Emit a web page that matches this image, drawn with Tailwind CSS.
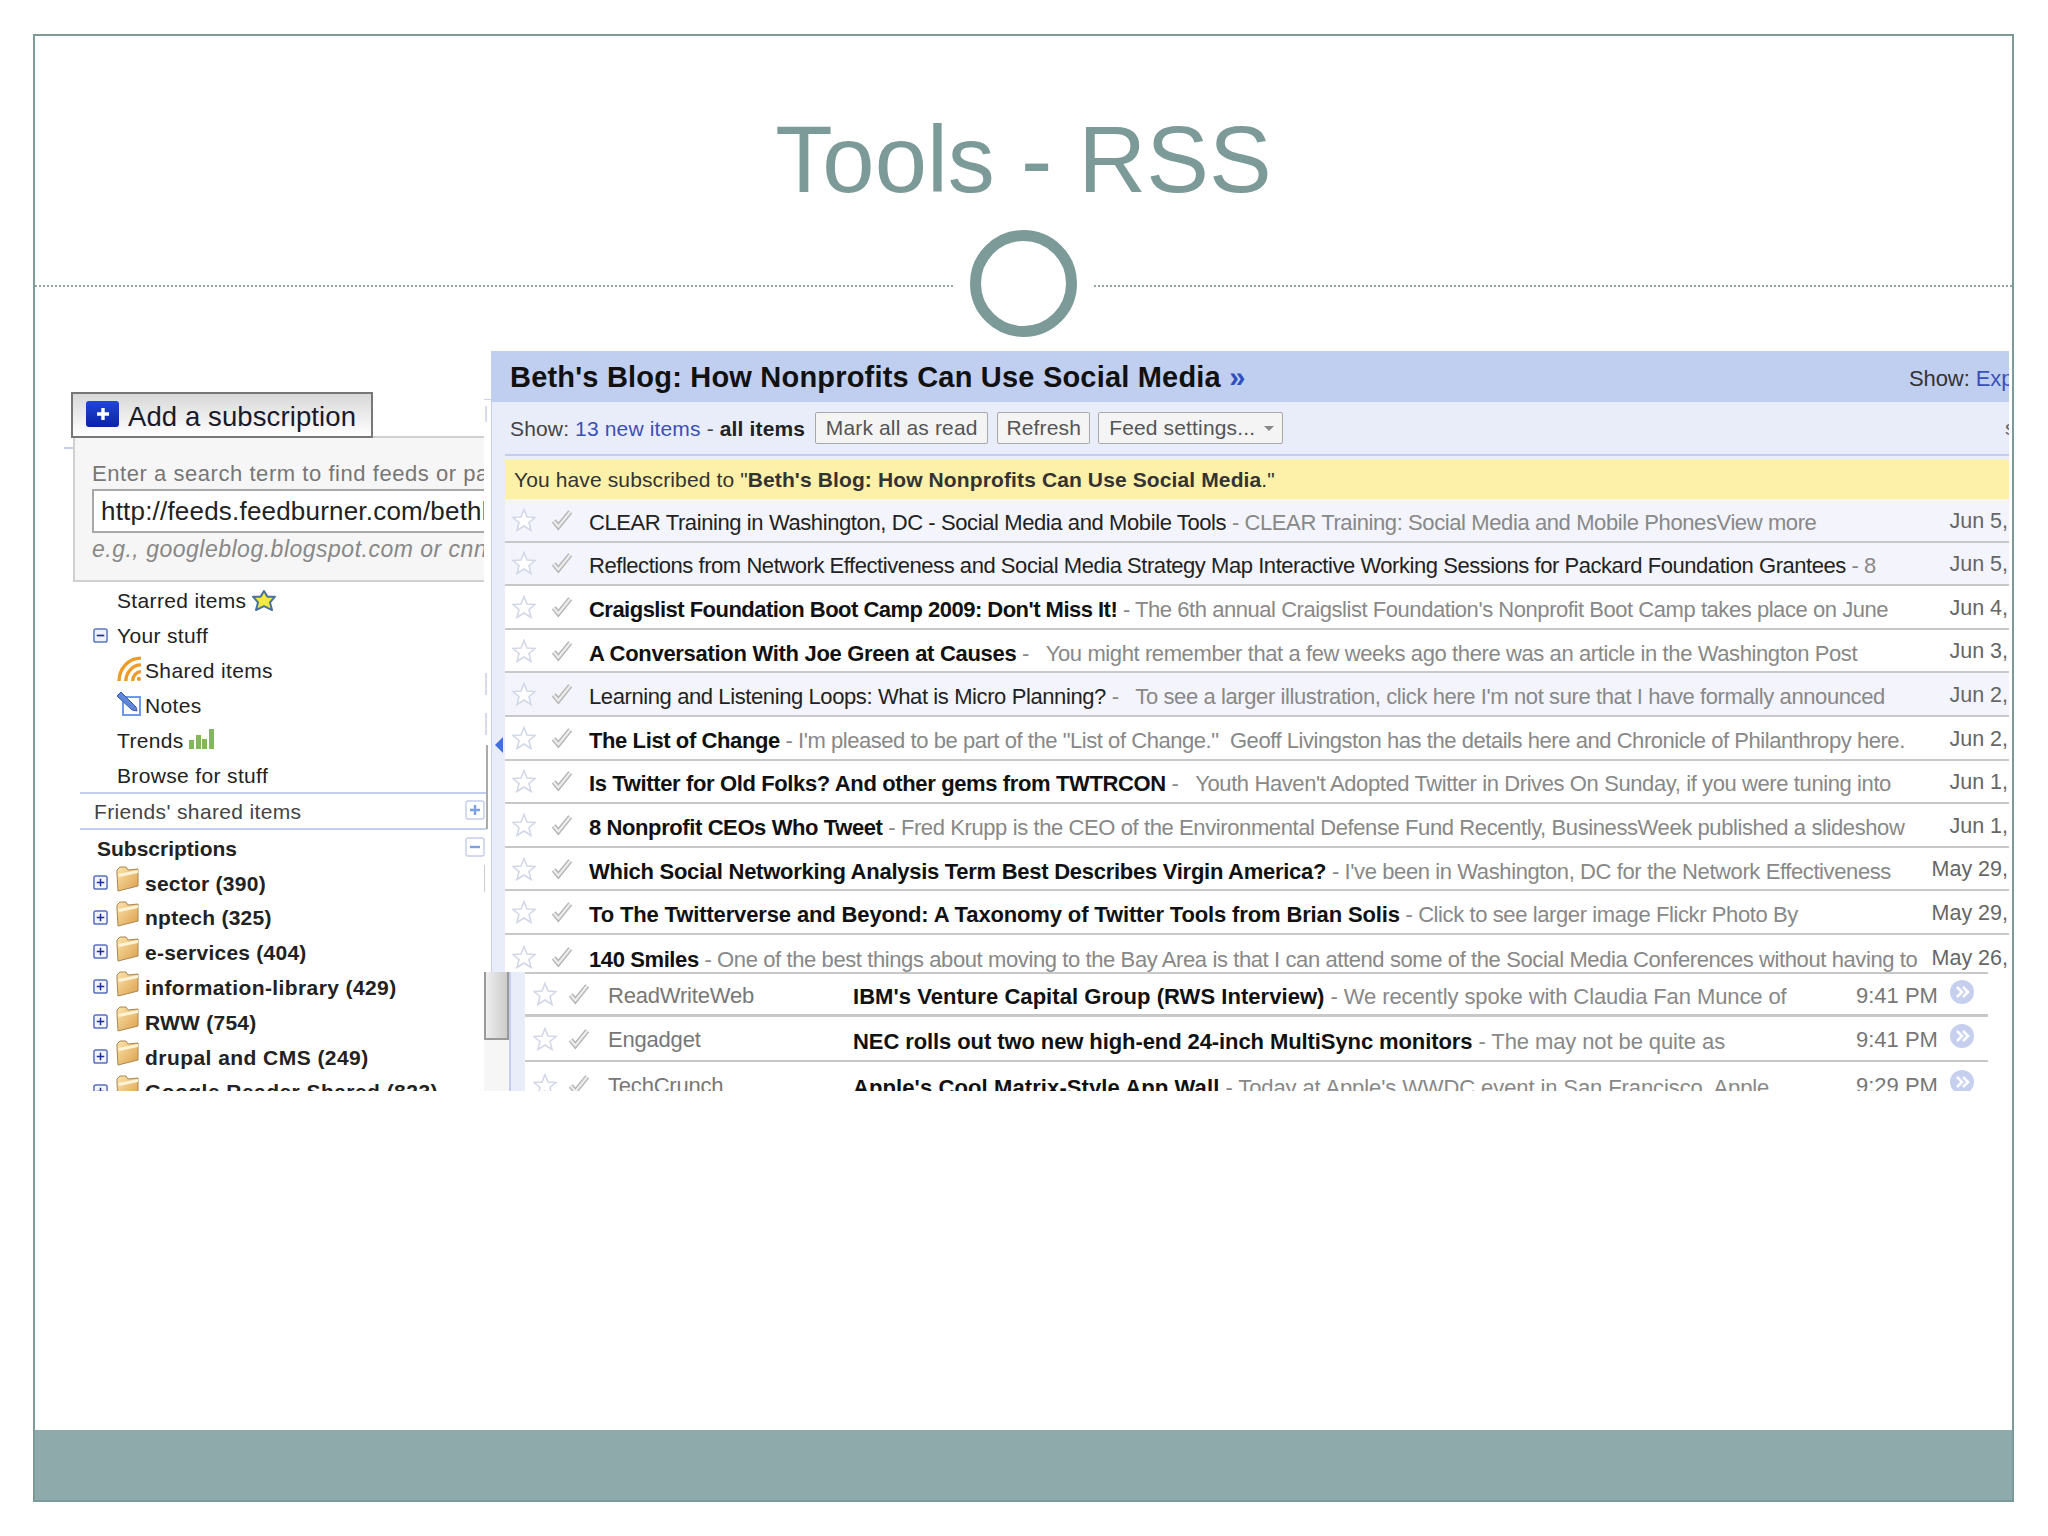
<!DOCTYPE html>
<html>
<head>
<meta charset="utf-8">
<script src="https://cdn.jsdelivr.net/npm/@tailwindcss/browser@4"></script>
</head>
<body class="bg-white font-['Liberation_Sans',Arial,sans-serif]">
<svg class="block w-0 h-0">
<defs>
<linearGradient id="fg" x1="0" y1="0" x2="1" y2="1"><stop offset="0" stop-color="#fbe3ac"/><stop offset="1" stop-color="#dda04c"/></linearGradient>
<symbol id="star" viewBox="0 0 24 24"><polygon points="12,1.5 15,9 23,9.5 17,14.5 19,22.5 12,18 5,22.5 7,14.5 1,9.5 9,9" fill="#fff" stroke="#d3d8e8" stroke-width="1.6"/></symbol>
<symbol id="check" viewBox="0 0 24 24"><path d="M3 13l5 6L21 3" fill="none" stroke="#b4b4b4" stroke-width="5.5"/><path d="M3 13l5 6L21 3" fill="none" stroke="#ececec" stroke-width="2.5"/></symbol>
<symbol id="plusbox" viewBox="0 0 16 16"><rect x="1" y="1" width="14" height="14" rx="2" fill="#f2f4fc" stroke="#5a6fc0" stroke-width="1.6"/><path d="M4 8h8M8 4v8" stroke="#1f2fa0" stroke-width="1.6"/></symbol>
<symbol id="folder" viewBox="0 0 23 26"><path d="M1 8V4l3-3h6l2 3 10-1v17L2 25z" fill="url(#fg)" stroke="#a8884f" stroke-width="1"/><path d="M2 8l20-4v3L3 11z" fill="#fff3d6"/></symbol>
<symbol id="chev" viewBox="0 0 24 24"><circle cx="12" cy="12" r="12" fill="#c6d0ee"/><path d="M7 7l5 5-5 5M13 7l5 5-5 5" fill="none" stroke="#fff" stroke-width="2.5"/></symbol>
</defs>
</svg>
<div class="pt-[34px] pl-[33px]">
<div class="w-[1981px] h-[1468px] border-2 border-[#7b9a98] flex flex-col bg-white">
  <h1 class="h-[193px] shrink-0 pt-[71px] text-center text-[94px] leading-[106px] text-[#7b9a98] font-normal">Tools - RSS</h1>
  <div class="h-[108px] shrink-0 flex items-center">
    <div class="flex-1 mt-[6px] border-t-2 border-dotted border-[#8fa8a6]"></div>
    <div class="w-[107px] h-[107px] mx-[17px] rounded-full border-[11px] border-[#7b9a98]"></div>
    <div class="flex-1 mt-[6px] border-t-2 border-dotted border-[#8fa8a6]"></div>
  </div>
  <div class="mt-[14px] h-[740px] shrink-0 flex overflow-hidden">
    <!-- left column -->
    <div class="ml-[29px] w-[420px] shrink-0 pt-[41px] text-[21px] tracking-[0.35px] text-[#222]">
      <div class="ml-[7px] w-[302px] h-[46px] border-2 border-[#777] bg-gradient-to-b from-[#d8d8d8] to-white flex items-center gap-[9px] pl-[13px] relative z-10 whitespace-nowrap">
        <div class="w-[33px] h-[26px] -mt-[3px] rounded-[3px] bg-gradient-to-b from-[#2346d8] to-[#0a22a8] flex items-center justify-center text-white"><svg class="w-[14px] h-[14px]" viewBox="0 0 14 14"><path d="M7 1v12M1 7h12" stroke="#fff" stroke-width="3.4"/></svg></div>
        <span class="text-[27.5px] pt-[3px] tracking-[0.1px] text-[#1a1a2a]">Add a subscription</span>
      </div>
      <div class="relative ml-[9px] w-[411px] -mt-[2px]">
        <div class="absolute left-[-9px] top-[11px] w-[9px] h-[2px] bg-[#c3cdec]"></div>
        <div class="h-[146px] bg-[#f6f6f6] border-l-2 border-b-2 border-t-2 border-[#d0d0d0] pl-[17px] pt-[22px] overflow-hidden whitespace-nowrap">
          <div class="text-[22px] leading-[28px] tracking-[0.55px] text-[#777]">Enter a search term to find feeds or paste</div>
          <div class="mt-[1px] h-[44px] border-2 border-[#a8a8a8] border-r-0 bg-white pl-[7px] text-[26px] leading-[40px] tracking-[0.2px] text-[#222]">http://feeds.feedburner.com/bethkanter</div>
          <div class="text-[23px] leading-[32px] italic tracking-[0.5px] text-[#888]">e.g., googleblog.blogspot.com or cnn.com</div>
        </div>
      </div>
      <div class="ml-[53px] mt-[1px] h-[35px] flex items-center gap-[6px]"><span>Starred items</span><svg class="w-[24px] h-[21px]" viewBox="0 0 24 22" preserveAspectRatio="none"><polygon points="12,1 15.5,7 23,7 18,13 20,21 12,17 4,21 6,13 1,7 8.5,7" fill="#f5e83e" stroke="#47719f" stroke-width="2" stroke-linejoin="round"/></svg></div>
      <div class="ml-[29px] h-[35px] flex items-center gap-[9px]"><svg class="w-[15px] h-[15px]" viewBox="0 0 16 16"><rect x="1" y="1" width="14" height="14" rx="2" fill="#eef1fb" stroke="#5a78c0" stroke-width="1.6"/><path d="M4 8h8" stroke="#1f2fa0" stroke-width="1.8"/></svg><span>Your stuff</span></div>
      <div class="ml-[53px] h-[35px] flex items-center gap-[3px]"><svg class="w-[25px] h-[25px] -mt-[4px]" viewBox="0 0 24 24"><g fill="none" stroke="#f09a28" stroke-width="3.2"><path d="M2 24C2 12 11 2 23 2"/><path d="M8.5 24C8.5 16 15 8.5 23 8.5"/><path d="M15 24c0-5 4-9 8-9"/></g><circle cx="21" cy="22" r="2" fill="#f09a28"/></svg><span>Shared items</span></div>
      <div class="ml-[53px] h-[35px] flex items-center gap-[4px]"><svg class="w-[24px] h-[25px] -mt-[4px]" viewBox="0 0 24 25"><path d="M6 6h17v18H6z" fill="#fff" stroke="#6f9ae8" stroke-width="2"/><path d="M0 5l4-4 15 15 1 4-5-1z" fill="#5f86d8" stroke="#3a5ab0"/></svg><span>Notes</span></div>
      <div class="ml-[53px] h-[35px] flex items-center gap-[5px]"><span>Trends</span><svg class="w-[25px] h-[20px] -mt-[4px]" viewBox="0 0 25 20"><path d="M0 11h5v9H0zM7 6h5v14H7zM13 10h5v10h-5zM20 0h5v20h-5z" fill="#82b858"/></svg></div>
      <div class="ml-[53px] h-[35px] flex items-center">Browse for stuff</div>
      <div class="ml-[16px] w-[407px] h-[38px] border-y-2 border-[#c3cdec] flex items-center justify-between pl-[14px] pr-[2px] mt-[-1px] text-[#444]"><span class="pt-[1px]">Friends' shared items</span><svg class="w-[20px] h-[20px] -mt-[3px]" viewBox="0 0 20 20"><rect x="1" y="1" width="18" height="18" rx="2" fill="#fff" stroke="#c3cdec" stroke-width="1.4"/><path d="M5 10h10M10 5v10" stroke="#7ba0e8" stroke-width="2.4"/></svg></div>
      <div class="ml-[16px] w-[407px] h-[36px] flex items-center justify-between pl-[17px] pr-[2px] font-bold tracking-[0px] text-[21px] text-[#222]"><span class="pt-[1px]">Subscriptions</span><svg class="w-[20px] h-[20px] -mt-[3px]" viewBox="0 0 20 20"><rect x="1" y="1" width="18" height="18" rx="2" fill="#fff" stroke="#c3cdec" stroke-width="1.4"/><path d="M5 10h10" stroke="#7ba0e8" stroke-width="2.4"/></svg></div>
      <div class="ml-[29px] font-bold tracking-[0.25px] text-[#222]">
        <div class="h-[34.8px] flex items-center"><svg class="w-[15px] h-[15px] mr-[8px] -mt-[2px]"><use href="#plusbox"/></svg><svg class="w-[23px] h-[26px] mr-[6px] -mt-[8px]"><use href="#folder"/></svg><span>sector (390)</span></div>
        <div class="h-[34.8px] flex items-center"><svg class="w-[15px] h-[15px] mr-[8px] -mt-[2px]"><use href="#plusbox"/></svg><svg class="w-[23px] h-[26px] mr-[6px] -mt-[8px]"><use href="#folder"/></svg><span>nptech (325)</span></div>
        <div class="h-[34.8px] flex items-center"><svg class="w-[15px] h-[15px] mr-[8px] -mt-[2px]"><use href="#plusbox"/></svg><svg class="w-[23px] h-[26px] mr-[6px] -mt-[8px]"><use href="#folder"/></svg><span>e-services (404)</span></div>
        <div class="h-[34.8px] flex items-center"><svg class="w-[15px] h-[15px] mr-[8px] -mt-[2px]"><use href="#plusbox"/></svg><svg class="w-[23px] h-[26px] mr-[6px] -mt-[8px]"><use href="#folder"/></svg><span class="tracking-[0.4px]">information-library (429)</span></div>
        <div class="h-[34.8px] flex items-center"><svg class="w-[15px] h-[15px] mr-[8px] -mt-[2px]"><use href="#plusbox"/></svg><svg class="w-[23px] h-[26px] mr-[6px] -mt-[8px]"><use href="#folder"/></svg><span>RWW (754)</span></div>
        <div class="h-[34.8px] flex items-center"><svg class="w-[15px] h-[15px] mr-[8px] -mt-[2px]"><use href="#plusbox"/></svg><svg class="w-[23px] h-[26px] mr-[6px] -mt-[8px]"><use href="#folder"/></svg><span class="tracking-[0.45px]">drupal and CMS (249)</span></div>
        <div class="h-[34.8px] flex items-center"><svg class="w-[15px] h-[15px] mr-[8px] -mt-[2px]"><use href="#plusbox"/></svg><svg class="w-[23px] h-[26px] mr-[6px] -mt-[8px]"><use href="#folder"/></svg><span class="tracking-[0.45px]">Google Reader Shared (823)</span></div>
      </div>
    </div>
    <!-- separator -->
    <div class="w-[7px] shrink-0">
      <div class="mt-[48px] h-[1px] bg-[#ccd4ee]"></div>
      <div class="mt-[6px] ml-[1px] w-[2px] h-[16px] bg-[#d5dcf2]"></div>
      <div class="mt-[251px] ml-[1px] w-[2px] h-[22px] bg-[#d5dcf2]"></div>
      <div class="mt-[18px] ml-[1px] w-[2px] h-[22px] bg-[#d5dcf2]"></div>
      <div class="mt-[10px] ml-[2px] w-[2px] h-[84px] bg-[#aaa]"></div>
      <div class="mt-[36px] w-[1px] h-[27px] bg-[#ccc]"></div>
    </div>
    <!-- right column -->
    <div class="w-[1518px] shrink-0 flex flex-col text-[22px] tracking-[-0.4px]">
      <div class="h-[51px] shrink-0 bg-[#c0cef0] flex items-center justify-between pl-[19px] overflow-hidden whitespace-nowrap">
        <div class="text-[29px] pt-[2px] font-bold tracking-[0.2px] text-[#111]">Beth's Blog: How Nonprofits Can Use Social Media <span class="text-[#2f4fc0]">»</span></div>
        <div class="text-[22px] pt-[3px] text-[#333] w-[100px] shrink-0 overflow-hidden tracking-[-0.1px]">Show: <span class="text-[#3a50b8]">Expanded</span></div>
      </div>
      <div class="relative h-[570px] shrink-0 bg-[#e9edfa] border-l border-[#c8d2f0] flex flex-col">
        <div class="absolute left-[3px] top-[335px] w-0 h-0 border-y-[8px] border-r-[8px] border-y-transparent border-r-[#3f6fe0]"></div>
        <div class="h-[52px] shrink-0 flex items-center pl-[18px] text-[21px] tracking-[0.15px] text-[#444] whitespace-nowrap">
          <span class="pt-[1px]">Show: <span class="text-[#3a50b8]">13 new items</span> - <b class="text-[#222]">all items</b></span>
          <span class="ml-[10px] w-[173px] h-[32px] flex items-center justify-center rounded-[2px] border border-[#a8a8a8] bg-[#f4f4f4] text-[#555]">Mark all as read</span>
          <span class="ml-[9px] w-[93px] h-[32px] flex items-center justify-center rounded-[2px] border border-[#a8a8a8] bg-[#f4f4f4] text-[#555]">Refresh</span>
          <span class="ml-[8px] w-[185px] h-[32px] flex items-center pl-[10px] rounded-[2px] border border-[#a8a8a8] bg-[#f4f4f4] text-[#555]">Feed settings...<span class="ml-[9px] w-0 h-0 border-x-[5px] border-t-[5px] border-x-transparent border-t-[#888]"></span></span>
          <span class="ml-auto w-[4px] overflow-hidden text-[#666]">s</span>
        </div>
        <div class="ml-[13px] flex-1 min-h-0 border-t-2 border-[#c3cdec] pt-[4px] flex flex-col">
          <div class="h-[39px] shrink-0 bg-[#fdf0a8] flex items-center pl-[9px] text-[21px] tracking-[0.12px] text-[#333] whitespace-nowrap">You have subscribed to "<b>Beth's Blog: How Nonprofits Can Use Social Media</b>."</div>
          <div class="flex-1 min-h-0 overflow-hidden">
            <div class="h-[43.6px] bg-[#f3f4fc] border-b-2 border-[#c8c8c8] flex items-center whitespace-nowrap"><svg class="ml-[7px] w-[24px] h-[24px] shrink-0"><use href="#star"/></svg><svg class="ml-[15px] w-[22px] h-[22px] shrink-0"><use href="#check"/></svg><div class="ml-[16px] w-[1340px] pt-[5px] shrink-0 overflow-hidden text-[#888]"><span class="text-[#222]">CLEAR Training in Washington, DC - Social Media and Mobile Tools</span> - CLEAR Training: Social Media and Mobile PhonesView more</div><div class="flex-1 pt-[2px] text-right text-[#666] tracking-[0px] text-[21.5px] pr-[1px]">Jun 5,</div></div>
            <div class="h-[43.6px] bg-[#f3f4fc] border-b-2 border-[#c8c8c8] flex items-center whitespace-nowrap"><svg class="ml-[7px] w-[24px] h-[24px] shrink-0"><use href="#star"/></svg><svg class="ml-[15px] w-[22px] h-[22px] shrink-0"><use href="#check"/></svg><div class="ml-[16px] w-[1340px] pt-[5px] shrink-0 overflow-hidden text-[#888] tracking-[-0.45px]"><span class="text-[#222]">Reflections from Network Effectiveness and Social Media Strategy Map Interactive Working Sessions for Packard Foundation Grantees</span> - 8</div><div class="flex-1 pt-[2px] text-right text-[#666] tracking-[0px] text-[21.5px] pr-[1px]">Jun 5,</div></div>
            <div class="h-[43.6px] bg-white border-b-2 border-[#c8c8c8] flex items-center whitespace-nowrap"><svg class="ml-[7px] w-[24px] h-[24px] shrink-0"><use href="#star"/></svg><svg class="ml-[15px] w-[22px] h-[22px] shrink-0"><use href="#check"/></svg><div class="ml-[16px] w-[1340px] pt-[5px] shrink-0 overflow-hidden text-[#888] tracking-[-0.45px]"><b class="text-[#111] tracking-[-0.52px]">Craigslist Foundation Boot Camp 2009: Don't Miss It!</b> - The 6th annual Craigslist Foundation's Nonprofit Boot Camp takes place on June</div><div class="flex-1 pt-[2px] text-right text-[#666] tracking-[0px] text-[21.5px] pr-[1px]">Jun 4,</div></div>
            <div class="h-[43.6px] bg-white border-b-2 border-[#c8c8c8] flex items-center whitespace-nowrap"><svg class="ml-[7px] w-[24px] h-[24px] shrink-0"><use href="#star"/></svg><svg class="ml-[15px] w-[22px] h-[22px] shrink-0"><use href="#check"/></svg><div class="ml-[16px] w-[1340px] pt-[5px] shrink-0 overflow-hidden text-[#888]"><b class="text-[#111] tracking-[-0.3px]">A Conversation With Joe Green at Causes</b> - &nbsp; You might remember that a few weeks ago there was an article in the Washington Post</div><div class="flex-1 pt-[2px] text-right text-[#666] tracking-[0px] text-[21.5px] pr-[1px]">Jun 3,</div></div>
            <div class="h-[43.6px] bg-[#f3f4fc] border-b-2 border-[#c8c8c8] flex items-center whitespace-nowrap"><svg class="ml-[7px] w-[24px] h-[24px] shrink-0"><use href="#star"/></svg><svg class="ml-[15px] w-[22px] h-[22px] shrink-0"><use href="#check"/></svg><div class="ml-[16px] w-[1340px] pt-[5px] shrink-0 overflow-hidden text-[#888]"><span class="text-[#222]">Learning and Listening Loops: What is Micro Planning?</span> - &nbsp; To see a larger illustration, click here I'm not sure that I have formally announced</div><div class="flex-1 pt-[2px] text-right text-[#666] tracking-[0px] text-[21.5px] pr-[1px]">Jun 2,</div></div>
            <div class="h-[43.6px] bg-white border-b-2 border-[#c8c8c8] flex items-center whitespace-nowrap"><svg class="ml-[7px] w-[24px] h-[24px] shrink-0"><use href="#star"/></svg><svg class="ml-[15px] w-[22px] h-[22px] shrink-0"><use href="#check"/></svg><div class="ml-[16px] w-[1340px] pt-[5px] shrink-0 overflow-hidden text-[#888] tracking-[-0.45px]"><b class="text-[#111] tracking-[-0.4px]">The List of Change</b> - I'm pleased to be part of the "List of Change." &nbsp;Geoff Livingston has the details here and Chronicle of Philanthropy here.</div><div class="flex-1 pt-[2px] text-right text-[#666] tracking-[0px] text-[21.5px] pr-[1px]">Jun 2,</div></div>
            <div class="h-[43.6px] bg-white border-b-2 border-[#c8c8c8] flex items-center whitespace-nowrap"><svg class="ml-[7px] w-[24px] h-[24px] shrink-0"><use href="#star"/></svg><svg class="ml-[15px] w-[22px] h-[22px] shrink-0"><use href="#check"/></svg><div class="ml-[16px] w-[1340px] pt-[5px] shrink-0 overflow-hidden text-[#888]"><b class="text-[#111] tracking-[-0.37px]">Is Twitter for Old Folks? And other gems from TWTRCON</b> - &nbsp; Youth Haven't Adopted Twitter in Drives On Sunday, if you were tuning into</div><div class="flex-1 pt-[2px] text-right text-[#666] tracking-[0px] text-[21.5px] pr-[1px]">Jun 1,</div></div>
            <div class="h-[43.6px] bg-white border-b-2 border-[#c8c8c8] flex items-center whitespace-nowrap"><svg class="ml-[7px] w-[24px] h-[24px] shrink-0"><use href="#star"/></svg><svg class="ml-[15px] w-[22px] h-[22px] shrink-0"><use href="#check"/></svg><div class="ml-[16px] w-[1340px] pt-[5px] shrink-0 overflow-hidden text-[#888]"><b class="text-[#111]">8 Nonprofit CEOs Who Tweet</b> - Fred Krupp is the CEO of the Environmental Defense Fund Recently, BusinessWeek published a slideshow</div><div class="flex-1 pt-[2px] text-right text-[#666] tracking-[0px] text-[21.5px] pr-[1px]">Jun 1,</div></div>
            <div class="h-[43.6px] bg-white border-b-2 border-[#c8c8c8] flex items-center whitespace-nowrap"><svg class="ml-[7px] w-[24px] h-[24px] shrink-0"><use href="#star"/></svg><svg class="ml-[15px] w-[22px] h-[22px] shrink-0"><use href="#check"/></svg><div class="ml-[16px] w-[1340px] pt-[5px] shrink-0 overflow-hidden text-[#888]"><b class="text-[#111] tracking-[-0.27px]">Which Social Networking Analysis Term Best Describes Virgin America?</b> - I've been in Washington, DC for the Network Effectiveness</div><div class="flex-1 pt-[2px] text-right text-[#666] tracking-[0px] text-[21.5px] pr-[1px]">May 29,</div></div>
            <div class="h-[43.6px] bg-white border-b-2 border-[#c8c8c8] flex items-center whitespace-nowrap"><svg class="ml-[7px] w-[24px] h-[24px] shrink-0"><use href="#star"/></svg><svg class="ml-[15px] w-[22px] h-[22px] shrink-0"><use href="#check"/></svg><div class="ml-[16px] w-[1340px] pt-[5px] shrink-0 overflow-hidden text-[#888]"><b class="text-[#111] tracking-[-0.14px]">To The Twitterverse and Beyond: A Taxonomy of Twitter Tools from Brian Solis</b> - Click to see larger image Flickr Photo By</div><div class="flex-1 pt-[2px] text-right text-[#666] tracking-[0px] text-[21.5px] pr-[1px]">May 29,</div></div>
            <div class="h-[43.6px] bg-white flex items-center whitespace-nowrap"><svg class="ml-[7px] w-[24px] h-[24px] shrink-0"><use href="#star"/></svg><svg class="ml-[15px] w-[22px] h-[22px] shrink-0"><use href="#check"/></svg><div class="ml-[16px] w-[1340px] pt-[5px] shrink-0 overflow-hidden text-[#888]"><b class="text-[#111]">140 Smiles</b> - One of the best things about moving to the Bay Area is that I can attend some of the Social Media Conferences without having to</div><div class="flex-1 pt-[2px] text-right text-[#666] tracking-[0px] text-[21.5px] pr-[1px]">May 26,</div></div>
          </div>
        </div>
      </div>
      <div class="h-[119px] shrink-0 -ml-[7px] flex bg-white text-[22px] tracking-[-0.1px]">
        <div class="w-[25px] shrink-0"><div class="h-[68px] border-x-2 border-b-2 border-[#999] bg-gradient-to-r from-[#eee] to-[#ccc]"></div><div class="h-[51px] bg-[#f6f6f6]"></div></div>
        <div class="w-[16px] shrink-0 bg-[#e9edfa] border-l-2 border-[#c3cdec]"></div>
        <div class="w-[1463px] shrink-0 overflow-hidden whitespace-nowrap">
          <div class="h-[45px] border-t-2 border-b-[3px] border-[#c8c8c8] flex items-center"><svg class="ml-[8px] w-[24px] h-[24px] shrink-0"><use href="#star"/></svg><svg class="ml-[11px] w-[22px] h-[22px] shrink-0"><use href="#check"/></svg><div class="ml-[18px] w-[245px] pt-[2px] shrink-0 text-[#777] tracking-[-0.2px]">ReadWriteWeb</div><div class="w-[1003px] pt-[5px] shrink-0 overflow-hidden text-[#888]"><b class="text-[#111] tracking-[0.05px]">IBM's Venture Capital Group (RWS Interview)</b> - We recently spoke with Claudia Fan Munce of</div><div class="text-[#777] pt-[2px] tracking-[0px]">9:41 PM</div><svg class="ml-[12px] w-[24px] h-[24px] shrink-0 -mt-[5px]"><use href="#chev"/></svg></div>
          <div class="h-[45px] border-b-2 border-[#c8c8c8] flex items-center"><svg class="ml-[8px] w-[24px] h-[24px] shrink-0"><use href="#star"/></svg><svg class="ml-[11px] w-[22px] h-[22px] shrink-0"><use href="#check"/></svg><div class="ml-[18px] w-[245px] pt-[2px] shrink-0 text-[#777] tracking-[-0.2px]">Engadget</div><div class="w-[1003px] pt-[5px] shrink-0 overflow-hidden text-[#888]"><b class="text-[#111] tracking-[-0.09px]">NEC rolls out two new high-end 24-inch MultiSync monitors</b> - The may not be quite as</div><div class="text-[#777] pt-[2px] tracking-[0px]">9:41 PM</div><svg class="ml-[12px] w-[24px] h-[24px] shrink-0 -mt-[5px]"><use href="#chev"/></svg></div>
          <div class="h-[45px] flex items-center"><svg class="ml-[8px] w-[24px] h-[24px] shrink-0"><use href="#star"/></svg><svg class="ml-[11px] w-[22px] h-[22px] shrink-0"><use href="#check"/></svg><div class="ml-[18px] w-[245px] pt-[2px] shrink-0 text-[#777] tracking-[-0.2px]">TechCrunch</div><div class="w-[1003px] pt-[5px] shrink-0 overflow-hidden text-[#888]"><b class="text-[#111] tracking-[0.1px]">Apple's Cool Matrix-Style App Wall</b> - Today at Apple's WWDC event in San Francisco, Apple</div><div class="text-[#777] pt-[2px] tracking-[0px]">9:29 PM</div><svg class="ml-[12px] w-[24px] h-[24px] shrink-0 -mt-[5px]"><use href="#chev"/></svg></div>
        </div>
      </div>
    </div>
  </div>
  <div class="flex-1"></div>
  <div class="h-[70px] shrink-0 bg-[#8eaaab]"></div>
</div>
</div>
</body>
</html>
